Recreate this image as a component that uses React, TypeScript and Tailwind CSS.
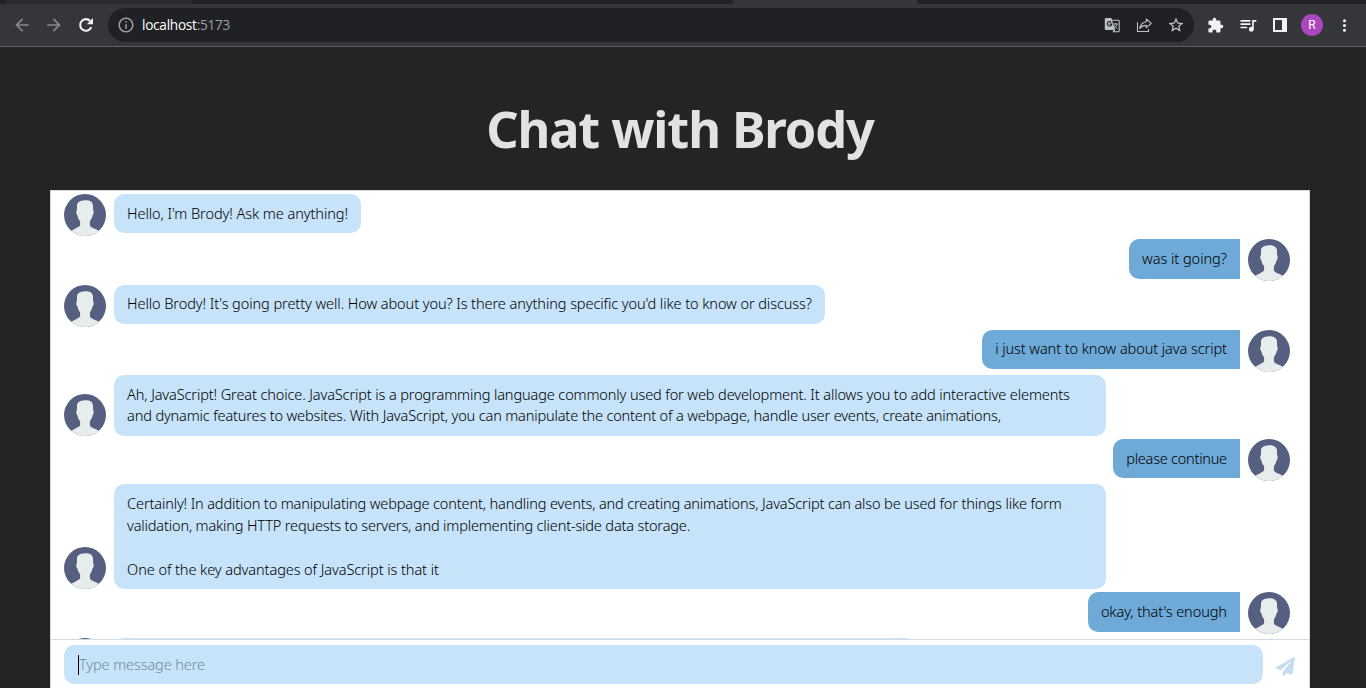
import type { ReactNode } from "react";
import {
  MdArrowBack,
  MdArrowForward,
  MdExtension,
  MdInfoOutline,
  MdMoreVert,
  MdOutlineQueueMusic,
  MdStarOutline,
} from "react-icons/md";
import { FaPaperPlane } from "react-icons/fa";

type Line = { text: string; tracking: string };
type Message = { side: "in" | "out"; lines: Line[] };

const messages: Message[] = [
  { side: "in", lines: [{ text: "Hello, I'm Brody! Ask me anything!", tracking: "tracking-[-0.08px]" }] },
  { side: "out", lines: [{ text: "was it going?", tracking: "tracking-[-0.05px]" }] },
  {
    side: "in",
    lines: [
      {
        text: "Hello Brody! It's going pretty well. How about you? Is there anything specific you'd like to know or discuss?",
        tracking: "tracking-[-0.09px]",
      },
    ],
  },
  { side: "out", lines: [{ text: "i just want to know about java script", tracking: "tracking-[-0.095px]" }] },
  {
    side: "in",
    lines: [
      {
        text: "Ah, JavaScript! Great choice. JavaScript is a programming language commonly used for web development. It allows you to add interactive elements",
        tracking: "tracking-[-0.13px]",
      },
      {
        text: "and dynamic features to websites. With JavaScript, you can manipulate the content of a webpage, handle user events, create animations,",
        tracking: "tracking-[-0.165px]",
      },
    ],
  },
  { side: "out", lines: [{ text: "please continue", tracking: "tracking-[-0.25px]" }] },
  {
    side: "in",
    lines: [
      {
        text: "Certainly! In addition to manipulating webpage content, handling events, and creating animations, JavaScript can also be used for things like form",
        tracking: "tracking-[-0.148px]",
      },
      {
        text: "validation, making HTTP requests to servers, and implementing client-side data storage.",
        tracking: "tracking-[-0.17px]",
      },
      { text: "", tracking: "tracking-normal" },
      { text: "One of the key advantages of JavaScript is that it", tracking: "tracking-[-0.09px]" },
    ],
  },
  { side: "out", lines: [{ text: "okay, that's enough", tracking: "tracking-[-0.1px]" }] },
];

function Avatar() {
  return (
    <svg viewBox="0 0 42 42" className="size-[42px] shrink-0">
      <defs>
        <clipPath id="avatar-clip">
          <circle cx="21" cy="21" r="21" />
        </clipPath>
      </defs>
      <g clipPath="url(#avatar-clip)">
        <rect width="42" height="42" fill="#556080" />
        <path
          d="M21 6.2C25.8 6 28.8 8 29 11.2L29.1 16.3C30.2 17 29.8 20.4 28.6 21.2C28.2 23.6 27.1 25.8 25.9 27.2V31.3C26.1 33 28.3 33.6 30.6 34.7C32.4 35.4 34.4 36.3 36 37.8V42H6V37.8C7.6 36.3 9.8 35.4 11.6 34.5C13.8 33.4 15.9 32.6 16.1 31.1V27.2C14.8 25.8 13.7 23.6 13.4 21.2C12.1 20.4 11.8 17 12.9 16.3L13 11.2C13.2 8 16.2 6.4 21 6.2Z"
          fill="#e7eced"
        />
      </g>
    </svg>
  );
}

function Bubble({ message }: { message: Message }) {
  const incoming = message.side === "in";
  const wide = message.lines.length > 1;
  return (
    <div
      className={
        incoming
          ? wide
            ? "w-[992px] rounded-[10.2px] bg-[#c6e3fa] px-[13.1px] py-[8.73px]"
            : "rounded-[10.2px] bg-[#c6e3fa] px-[13.1px] py-[8.73px]"
          : "rounded-l-[10.2px] bg-[#6ea9d7] px-[13.1px] py-[8.73px]"
      }
    >
      {message.lines.map((line, i) => (
        <p key={i} className={`h-[21.84px] whitespace-nowrap ${line.tracking}`}>
          {line.text}
        </p>
      ))}
    </div>
  );
}

function MessageRow({ message }: { message: Message }) {
  const incoming = message.side === "in";
  return (
    <div
      className={
        incoming
          ? "mb-[3.2px] flex min-h-[42px] gap-2"
          : "mb-[3.2px] flex min-h-[42px] flex-row-reverse gap-2"
      }
    >
      <div className="flex flex-col justify-end">
        <Avatar />
      </div>
      <div className="flex flex-col justify-start">
        <Bubble message={message} />
      </div>
    </div>
  );
}

function ToolbarIcon({ children }: { children: ReactNode }) {
  return <span className="flex size-8 shrink-0 items-center justify-center">{children}</span>;
}

function ReloadIcon() {
  return (
    <svg viewBox="0 0 16 16" className="size-4 text-[#f1f3f4]">
      <path d="M13.3 10.2A5.8 5.8 0 1 1 12.2 4" fill="none" stroke="currentColor" strokeWidth="2.1" />
      <path d="M15 1v6.2H8.8z" fill="currentColor" />
    </svg>
  );
}

function TranslateIcon() {
  return (
    <svg viewBox="0 0 16 16" className="mr-px size-4">
      <path d="M1.8 1h5.6l3.7 12H1.8A1 1 0 0 1 .8 12V2a1 1 0 0 1 1-1z" fill="#bdc1c6" />
      <path d="M8.2 3.2h6a1 1 0 0 1 1 1v9.6a1 1 0 0 1-1 1H9.3l1.6-2" fill="none" stroke="#bdc1c6" strokeWidth="1.1" />
      <path d="M7.2 5.4a2.2 2.2 0 1 0 .5 1.7H5.6" fill="none" stroke="#202124" strokeWidth="1.1" />
      <path d="M9.3 7h4.6M11.4 6v1M13 7.2c-.4 1.8-1.4 3-2.8 3.9M10.4 8.4c.7 1.5 1.8 2.5 3 3.2" fill="none" stroke="#bdc1c6" strokeWidth="1" />
    </svg>
  );
}

function ShareIcon() {
  return (
    <svg viewBox="0 0 16 16" className="size-4" fill="none" stroke="#bdc1c6" strokeWidth="1.1">
      <path d="M1.5 5.2v9.3h11v-2.6" />
      <path d="M10.3 2l5 4.3-5 4.3V8.4c-2.8 0-4.9.8-6.5 2.9.5-3.4 2.7-6 6.5-6.6z" strokeLinejoin="round" />
    </svg>
  );
}

function BrowserBar() {
  return (
    <header className="h-[47px] shrink-0 border-b border-[#5c5e62] bg-[#35363a]">
      <div className="flex h-1 bg-[#35363a]">
        <div className="w-[7px] rounded-br-md bg-[#202124]" />
        <div className="w-[185px] bg-[#292a2d]" />
        <div className="w-[541px] rounded-br-md bg-[#202124]" />
        <div className="w-[184px]" />
        <div className="flex-1 rounded-bl-md bg-[#202124]" />
      </div>
      <div className="flex h-[42px] items-center pl-[6px] pr-[5px]">
        <ToolbarIcon>
          <MdArrowBack className="size-5 text-[#87888b]" />
        </ToolbarIcon>
        <ToolbarIcon>
          <MdArrowForward className="size-5 text-[#87888b]" />
        </ToolbarIcon>
        <ToolbarIcon>
          <ReloadIcon />
        </ToolbarIcon>
        <div className="ml-[6px] flex h-[34px] w-[1086px] items-center rounded-full bg-[#202124] pl-[9px] pr-[2px]">
          <MdInfoOutline className="size-[18px] text-[#9aa0a6]" />
          <span className="ml-[7px] flex-1 font-['Open_Sans',sans-serif] text-[13.6px] leading-5 tracking-[-0.25px] text-[#9aa0a6]">
            <span className="text-white">localhost</span>:5173
          </span>
          <ToolbarIcon>
            <TranslateIcon />
          </ToolbarIcon>
          <ToolbarIcon>
            <ShareIcon />
          </ToolbarIcon>
          <ToolbarIcon>
            <MdStarOutline className="size-[18px] text-[#c4c7cb]" />
          </ToolbarIcon>
        </div>
        <div className="ml-[6px] flex items-center text-[#f1f3f4]">
          <ToolbarIcon>
            <MdExtension className="mr-px size-[17px]" />
          </ToolbarIcon>
          <ToolbarIcon>
            <MdOutlineQueueMusic className="size-5" />
          </ToolbarIcon>
          <ToolbarIcon>
            <span className="h-[14px] w-[14px] border-2 border-r-[5px] border-[#f1f3f4]" />
          </ToolbarIcon>
          <ToolbarIcon>
            <span className="flex size-[22px] items-center justify-center rounded-full bg-[#ab47bc] font-['Roboto',sans-serif] text-[12px] text-white">
              R
            </span>
          </ToolbarIcon>
          <ToolbarIcon>
            <MdMoreVert className="size-[19px]" />
          </ToolbarIcon>
        </div>
      </div>
    </header>
  );
}

export default function App() {
  return (
    <div className="flex h-[688px] w-[1366px] flex-col overflow-hidden bg-[#242424] font-['Noto_Sans',sans-serif]">
      <BrowserBar />
      <main className="flex min-h-0 flex-1 flex-col px-[50px] pr-[56px]">
        <h1 className="mt-[54px] h-[89px] shrink-0 text-center text-[50.5px] leading-[56px] font-bold tracking-[-1.1px] text-[#e2e2e2]">
          Chat with Brody
        </h1>
        <section className="flex min-h-0 flex-1 flex-col border border-b-0 border-[#d1dbe3] bg-white text-[14.56px] leading-[21.84px] font-light text-black">
          <div className="h-[448px] shrink-0 overflow-hidden pt-[3.2px] pl-[13px] pr-[19px]">
            {messages.map((message, i) => (
              <MessageRow key={i} message={message} />
            ))}
            <div className="flex gap-2">
              <Avatar />
              <div className="h-[61px] w-[801px] rounded-[10.2px] bg-[#c6e3fa]" />
            </div>
          </div>
          <div className="flex min-h-0 flex-1 items-start border-t border-[#d1dbe3] pt-[5px] pl-[13px]">
            <div className="flex h-[39px] w-[1199px] items-center rounded-[10.2px] bg-[#c6e3fa] pl-[14px]">
              <span className="h-5 w-px bg-black" />
              <span className="tracking-[-0.12px] text-[#7489a0]">Type message here</span>
            </div>
            <FaPaperPlane className="mt-[12px] ml-[13px] size-[19px] text-[#c6dcf1]" />
          </div>
        </section>
      </main>
    </div>
  );
}
